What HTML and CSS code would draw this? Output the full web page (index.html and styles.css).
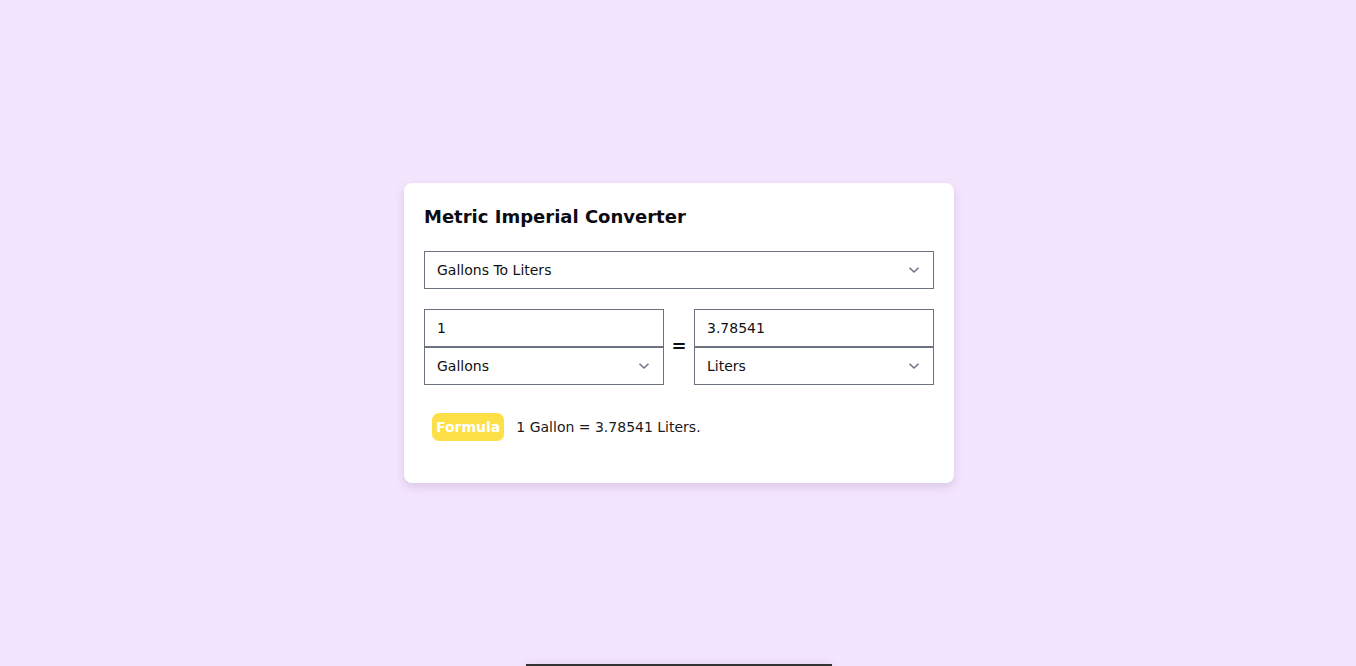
FILE: index.html
```html
<!DOCTYPE html>
<html lang="en">
<head>
<meta charset="utf-8">
<title>Metric Imperial Converter</title>
<link rel="stylesheet" href="styles.css">
</head>
<body>
<main class="page">
  <section class="card">
    <h1 class="title">Metric Imperial Converter</h1>
    <div class="field">
      <select class="control">
        <option>Gallons To Liters</option>
      </select>
      <svg class="chev" width="12" height="8" viewBox="0 0 12 8"><path d="M1.5 1.8 L6 6 L10.5 1.8" fill="none" stroke="#6b7280" stroke-width="1.5"/></svg>
    </div>
    <div class="convert">
      <div class="stack">
        <input class="control" type="text" value="1">
        <div class="field">
          <select class="control"><option>Gallons</option></select>
          <svg class="chev" width="12" height="8" viewBox="0 0 12 8"><path d="M1.5 1.8 L6 6 L10.5 1.8" fill="none" stroke="#6b7280" stroke-width="1.5"/></svg>
        </div>
      </div>
      <div class="equals">=</div>
      <div class="stack">
        <input class="control" type="text" value="3.78541">
        <div class="field">
          <select class="control"><option>Liters</option></select>
          <svg class="chev" width="12" height="8" viewBox="0 0 12 8"><path d="M1.5 1.8 L6 6 L10.5 1.8" fill="none" stroke="#6b7280" stroke-width="1.5"/></svg>
        </div>
      </div>
    </div>
    <div class="formula">
      <span class="badge">Formula</span>
      <span class="formula-text">1 Gallon = 3.78541 Liters.</span>
    </div>
  </section>
</main>
<footer class="bottom-bar"></footer>
</body>
</html>
```
FILE: styles.css
```css
html, body {
  margin: 0;
  padding: 0;
}
body {
  background: #f4e5fe;
  font-family: "DejaVu Sans", "Liberation Sans", sans-serif;
  color: #111;
  padding-left: 2px;
}
.page {
  height: 664px;
  box-sizing: border-box;
  padding-top: 2px;
  display: flex;
  align-items: center;
  justify-content: center;
}
.card {
  width: 550px;
  height: 300px;
  box-sizing: border-box;
  background: #fff;
  border-radius: 8px;
  padding: 20px;
  box-shadow: 0 4px 10px rgba(90, 60, 120, 0.18);
}
.title {
  margin: 2px 0 22px 0;
  font-size: 18px;
  line-height: 24px;
  font-weight: bold;
  color: #0b0b14;
}
.field {
  position: relative;
}
.control {
  display: block;
  width: 100%;
  height: 38px;
  box-sizing: border-box;
  border: 1px solid #6b7280;
  border-radius: 0;
  background: #fff;
  padding: 0 12px;
  font-family: "DejaVu Sans", "Liberation Sans", sans-serif;
  font-size: 14px;
  color: #111;
  -webkit-appearance: none;
  appearance: none;
  outline: none;
  margin: 0;
}
.chev {
  position: absolute;
  right: 14px;
  top: 15px;
  pointer-events: none;
}
.convert {
  display: flex;
  align-items: center;
  margin-top: 20px;
}
.stack {
  width: 240px;
}
.equals {
  width: 30px;
  text-align: center;
  font-weight: bold;
  font-size: 18px;
  line-height: 18px;
  margin-top: -2px;
}
.formula {
  display: flex;
  align-items: center;
  margin-top: 28px;
  padding-left: 8px;
}
.badge {
  background: #fde047;
  color: #fff;
  font-weight: bold;
  font-size: 14px;
  border-radius: 7px;
  height: 28px;
  line-height: 28px;
  padding: 0 4px;
}
.formula-text {
  margin-left: 12px;
  font-size: 14px;
  color: #1a1a1a;
}
.bottom-bar {
  width: 306px;
  height: 40px;
  margin: 0 auto;
  border-top: 2px solid #333;
  background: #f4e5fe;
  box-shadow: 0 -2px 8px rgba(90, 60, 120, 0.08);
}
```
